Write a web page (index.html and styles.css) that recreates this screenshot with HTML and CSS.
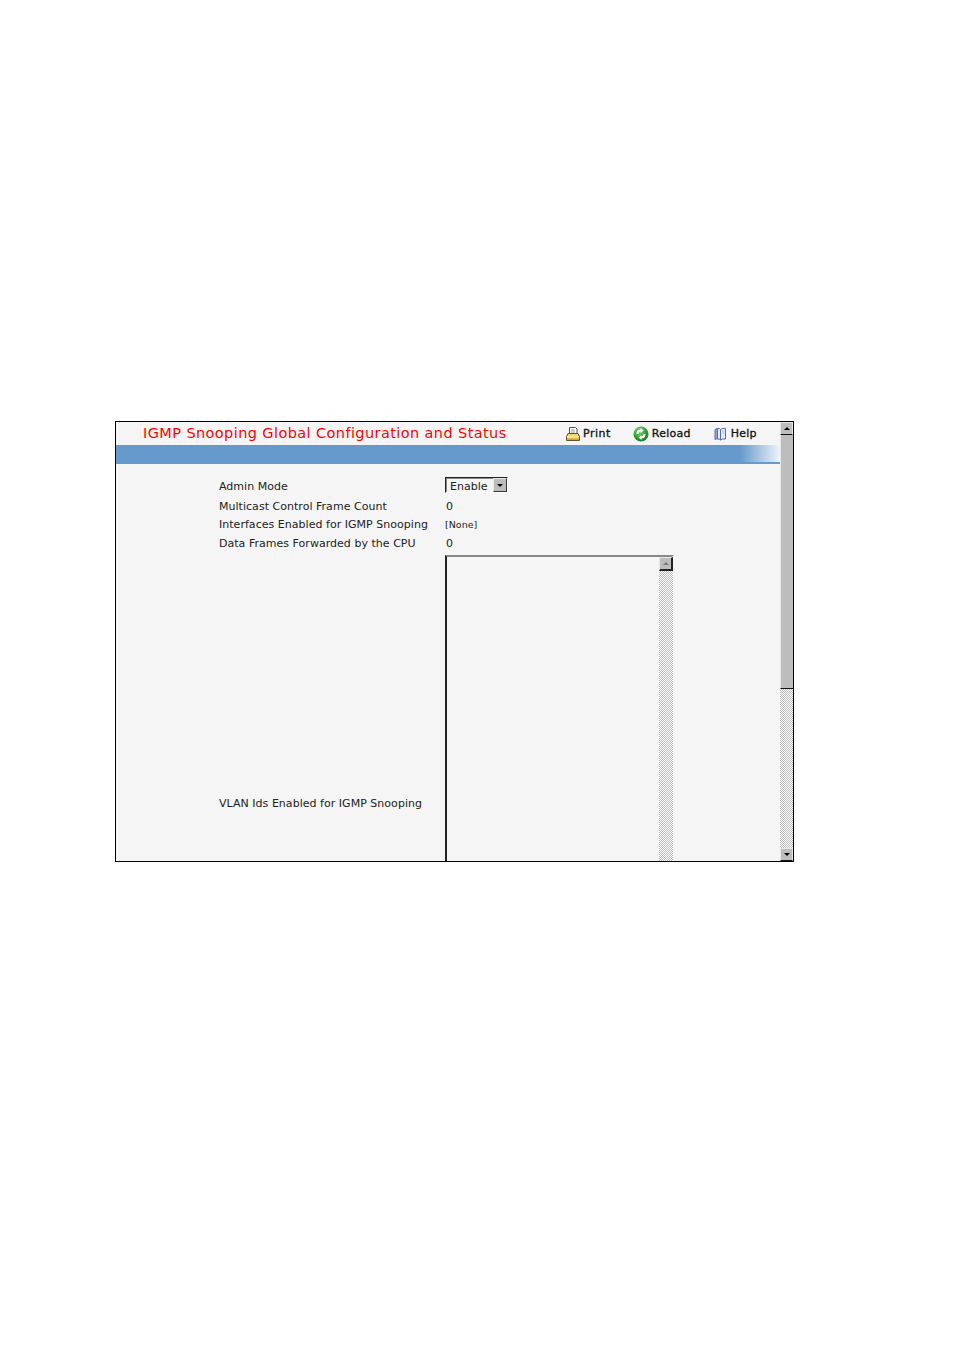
FILE: index.html
```html
<!DOCTYPE html>
<html lang="en">
<head>
    <meta charset="UTF-8">
    <title>IGMP Snooping Global Configuration and Status</title>
    <link rel="stylesheet" href="styles.css">
</head>
<body>

    <div class="frame">
        <div class="content">
            <!-- Title and toolbar -->
            <div class="header">
                <h1>IGMP Snooping Global Configuration and Status</h1>
                <div class="tools">
                    <span class="tool tool-print">
                        <svg width="14" height="14" viewBox="0 0 14 14">
                            <path d="M3.500 .5h6l1.500 1.500v4.500h-7.500z" fill="#fff" stroke="#555"/>
                            <path d="M5 3h4M5 5h4" stroke="#999"/>
                            <path d="M2 6.500h10l1.500 3v4h-13v-4z" fill="#f5d468" stroke="#5f5330"/>
                            <path d="M1 10h12" stroke="#fff6cf"/>
                            <path d="M1 11.500h12v1.500h-12z" fill="#e39c1e"/>
                        </svg>
                        Print
                    </span>
                    <span class="tool tool-reload">
                        <svg width="16" height="16" viewBox="0 0 16 16">
                            <defs>
                                <radialGradient id="ball" cx="40%" cy="30%" r="75%">
                                    <stop offset="0" stop-color="#8edb7c"/>
                                    <stop offset="0.6" stop-color="#2f9e33"/>
                                    <stop offset="1" stop-color="#17772a"/>
                                </radialGradient>
                            </defs>
                            <circle cx="8" cy="8" r="7.500" fill="url(#ball)"/>
                            <path d="M3.500 8a4.500 4.500 0 0 1 4-4.500v-1.500l3 2.500-3 2.500v-1.500a2.500 2.500 0 0 0-2 2.500z" fill="#fff"/>
                            <path d="M12.500 8a4.500 4.500 0 0 1-4 4.500v1.500l-3-2.500 3-2.500v1.500a2.500 2.500 0 0 0 2-2.500z" fill="#fff"/>
                        </svg>
                        Reload
                    </span>
                    <span class="tool tool-help">
                        <svg width="13" height="14" viewBox="0 0 13 14">
                            <path d="M1 2.500q2-1.500 4-.5v10q-2-1-4 .5z" fill="#8fa3dc" stroke="#5a6cab"/>
                            <path d="M3.500 1.500q2-.5 3 1 1.500-1.500 5-1v10.500q-3.500-.5-5 1-1-1.500-3-1z" fill="#e6ebfa" stroke="#5a6cab"/>
                            <path d="M6.500 2.500v10.500" stroke="#5a6cab"/>
                            <path d="M8 4h2.500M8 6h2.500" stroke="#b7c3e6"/>
                        </svg>
                        Help
                    </span>
                </div>
            </div>
            <div class="band"></div>

            <!-- Status table -->
            <div class="form">
                <div class="row row-mode">
                    <span class="label">Admin Mode</span>
                    <span class="select">
                        <span class="select-text">Enable</span>
                        <span class="btn btn-small"><i class="arrow-down"></i></span>
                    </span>
                </div>
                <div class="row row-count">
                    <span class="label">Multicast Control Frame Count</span>
                    <span class="value">0</span>
                </div>
                <div class="row row-ifaces">
                    <span class="label">Interfaces Enabled for IGMP Snooping</span>
                    <span class="value value-small">[None]</span>
                </div>
                <div class="row row-frames">
                    <span class="label">Data Frames Forwarded by the CPU</span>
                    <span class="value">0</span>
                </div>
                <div class="row row-vlan">
                    <span class="label">VLAN Ids Enabled for IGMP Snooping</span>
                    <div class="listbox">
                        <div class="listbox-bar">
                            <span class="btn"><i class="arrow-up arrow-grey"></i></span>
                        </div>
                    </div>
                </div>
            </div>
        </div>

        <!-- Page scrollbar -->
        <div class="scrollbar">
            <span class="btn btn-page"><i class="arrow-up"></i></span>
            <span class="thumb"></span>
            <span class="track"></span>
            <span class="btn btn-page"><i class="arrow-down"></i></span>
        </div>
    </div>

</body>
</html>
```

FILE: styles.css
```css
html, body {
    margin: 0;
    background-color: #fff;
}
body {
    padding: 421px 0 0 115px;
    height: 929px;
    box-sizing: border-box;
    font-family: "DejaVu Sans", Verdana, sans-serif;
    font-size: 11px;
    color: #222;
    overflow: hidden;
}
.frame {
    width: 679px;
    height: 441px;
    box-sizing: border-box;
    border: 1px solid #000;
    background-color: #f5f5f5;
    display: flex;
    overflow: hidden;
}
.content {
    width: 664px;
    overflow: hidden;
}

/* Header */
.header {
    height: 23px;
    display: flex;
    align-items: center;
    padding-left: 27px;
}
h1 {
    margin: 0 0 1px;
    width: 423px;
    flex: none;
    font-size: 14.500px;
    letter-spacing: 0.4px;
    font-weight: normal;
    color: #f00;
    white-space: nowrap;
}
.tools {
    display: flex;
    align-items: center;
}
.tool {
    display: flex;
    align-items: center;
    gap: 3px;
    font-weight: normal;
    color: #111;
    letter-spacing: 0.25px;
    -webkit-text-stroke: 0.3px #111;
}
.tool-print {
    letter-spacing: 0.5px;
}
.tool-reload {
    margin-left: 22px;
}
.tool-help {
    margin-left: 23px;
    gap: 4px;
}
.band {
    height: 19px;
    box-sizing: border-box;
    border-bottom: 2px solid #6699cc;
    background: linear-gradient(to right, #6699cc 94%, #eef5fb 100%);
}

/* Form rows */
.form {
    padding: 13px 0 0 103px;
}
.row {
    display: grid;
    grid-template-columns: 226px 1fr;
    align-items: center;
}
.label {
    letter-spacing: 0.03px;
}
.row-mode {
    height: 16px;
}
.row-mode .label, .select-text {
    padding-top: 2px;
}
.row-count {
    height: 18px;
    margin-top: 4px;
}
.row-ifaces {
    height: 17px;
    margin-top: 1px;
}
.row-frames {
    height: 18px;
    margin-top: 1px;
}
.row-vlan {
    margin-top: 3px;
}
.value {
    padding-left: 1px;
}
.value-small {
    padding-left: 0;
    font-size: 9.500px;
}

/* Select */
.select {
    width: 63px;
    height: 16px;
    box-sizing: border-box;
    border: 1px solid;
    border-color: #222 #fff #fff #222;
    box-shadow: inset 1px 1px 0 #888;
    display: flex;
    align-items: center;
    justify-content: space-between;
    padding-left: 4px;
}
.btn {
    display: flex;
    align-items: center;
    justify-content: center;
    box-sizing: border-box;
    width: 13px;
    height: 13px;
    flex: none;
    background-color: #bdbdbd;
    border: 1px solid;
    border-color: #e8e8e8 #333 #333 #e8e8e8;
}
.btn-small {
    width: 14px;
    height: 14px;
}
.arrow-down, .arrow-up {
    display: block;
    width: 0;
    height: 0;
    border-left: 3px solid transparent;
    border-right: 3px solid transparent;
}
.arrow-down {
    border-top: 3px solid #000;
}
.arrow-up {
    border-bottom: 3px solid #000;
}
.arrow-grey {
    border-bottom-color: #777;
}

/* VLAN list */
.listbox {
    width: 229px;
    height: 496px;
    box-sizing: border-box;
    border: 2px solid;
    border-color: #888 #f5f5f5 #333 #222;
    display: flex;
    justify-content: flex-end;
}
.listbox-bar {
    width: 14px;
    margin-right: -1px;
    background: repeating-conic-gradient(#bbb 0 25%, #fff 0 50%) 0 0 / 2px 2px;
}
.listbox-bar .btn {
    width: 14px;
    height: 14px;
    border-width: 1px 2px 2px 1px;
    border-color: #e8e8e8 #222 #222 #e8e8e8;
}

/* Page scrollbar */
.scrollbar {
    width: 13px;
    flex: none;
    display: flex;
    flex-direction: column;
    background-color: #f5f5f5;
}
.btn-page {
    height: 13px;
    border-color: #e8e8e8 #e8e8e8 #111 #e8e8e8;
}
.thumb {
    height: 254px;
    flex: none;
    box-sizing: border-box;
    background-color: #bdbdbd;
    border-left: 1px solid #e8e8e8;
    border-bottom: 1px solid #111;
}
.track {
    flex: 1;
    background: repeating-conic-gradient(#bbb 0 25%, #fff 0 50%) 0 0 / 2px 2px;
}
```
